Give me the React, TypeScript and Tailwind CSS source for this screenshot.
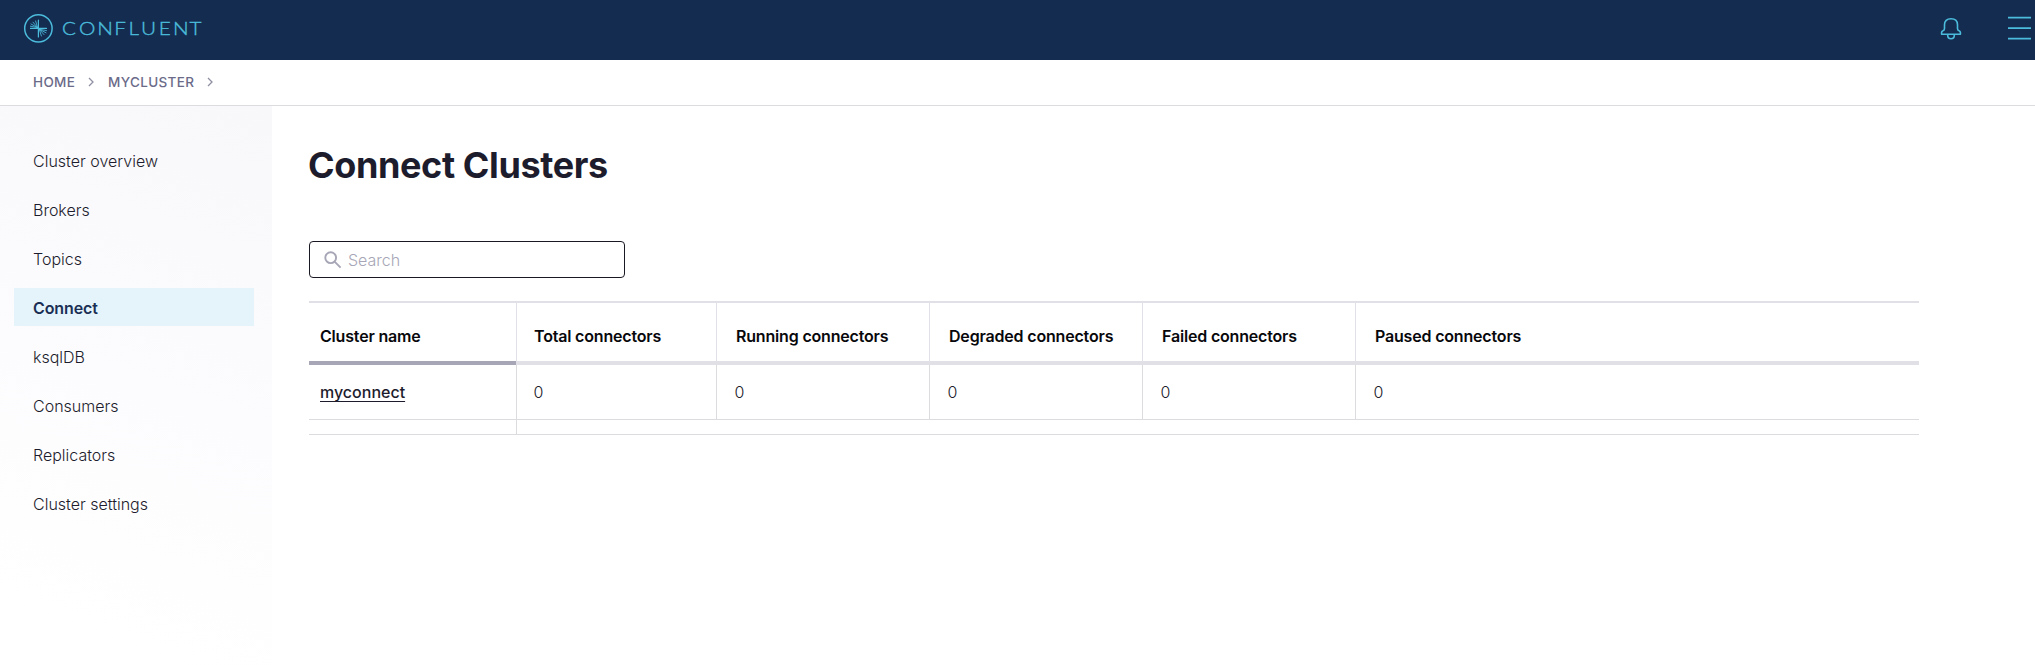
import React from "react";

const NAV = ["Cluster overview", "Brokers", "Topics", "Connect", "ksqlDB", "Consumers", "Replicators", "Cluster settings"];

const COLUMNS = ["Cluster name", "Total connectors", "Running connectors", "Degraded connectors", "Failed connectors", "Paused connectors"];

const GRID = "grid grid-cols-[207px_200px_213px_213px_213px_1fr]";

function Logo() {
  return (
    <svg width="190" height="32" viewBox="0 0 190 32" fill="none" stroke="#4bbcdb" aria-label="Confluent">
      <circle cx="15.400" cy="15.400" r="13.700" strokeWidth="1.500" />
      <g strokeWidth="0.850" strokeLinecap="round">
        <path d="M15.400 7V24M7.500 15.400H23.500" strokeWidth="1.200" />
        <path d="M14.600 14.600L10 9.200M14.600 14.600L12.600 8M14.600 14.600L8 11M14.600 14.600L7.400 13.200M16.200 16.200L21 21.600M16.200 16.200L18.400 23M16.200 16.200L23 19.800M16.200 16.200L23.500 17.600" />
      </g>
      <text
        transform="scale(1.15 1)"
        x="33.900 48.700 64.500 79.300 91.700 102.700 118 130.400 144.700"
        y="21.700"
        fill="#4bbcdb"
        strokeWidth="0.350"
        fontFamily="Lato, sans-serif"
        fontWeight="300"
        fontSize="18"
      >
        CONFLUENT
      </text>
    </svg>
  );
}

function BellIcon() {
  return (
    <svg width="22" height="24" viewBox="0 0 22 24" fill="none" stroke="#4bbcdb" strokeWidth="1.600" strokeLinejoin="round">
      <path d="M4.500 11.500V7.800C4.500 4 6.800 1.800 11 1.800s6.500 2.200 6.500 6v3.700c0 1.300.4 1.900 1.500 2.200.9.3 1.400.8 1.400 1.800v1.700H1.600v-1.700c0-1 .5-1.500 1.400-1.800C4.100 13.400 4.500 12.800 4.500 11.500Z" />
      <path d="M7.700 17.200v1c0 2 1.300 3.500 3.300 3.500s3.300-1.500 3.300-3.500v-1" />
    </svg>
  );
}

function MenuIcon() {
  return (
    <svg width="23" height="24" viewBox="0 0 23 24" fill="none" stroke="#4bbcdb" strokeWidth="1.800">
      <path d="M0 1.700H23M0 12.200H23M0 22.700H23" />
    </svg>
  );
}

function Chevron() {
  return (
    <svg width="6" height="10" viewBox="0 0 6 10" fill="none" stroke="#8f8fa3" strokeWidth="1.300">
      <path d="M1 1l4 4-4 4" />
    </svg>
  );
}

export default function App() {
  return (
    <div className="flex h-[665px] w-[2035px] flex-col overflow-hidden bg-white font-['Inter',sans-serif] text-[#1d1c2d]">
      <header className="flex h-[60px] shrink-0 items-start justify-between bg-[#152c51] pt-[13px] pr-1 pl-[23px]">
        <Logo />
        <div className="flex gap-[46.500px] pt-[3px]">
          <div className="pt-[1px]">
            <BellIcon />
          </div>
          <MenuIcon />
        </div>
      </header>

      <nav className="flex h-[46px] shrink-0 items-center border-b border-[#dcdce0] pb-px pl-[33px] text-[13.500px] font-medium tracking-[0.350px] text-[#6b6b89]">
        <a className="mr-[13px] w-[42px]">HOME</a>
        <Chevron />
        <a className="mr-[14px] ml-[14px] w-[85px]">MYCLUSTER</a>
        <Chevron />
      </nav>

      <div className="flex min-h-0 flex-1">
        <aside className="flex w-[272px] shrink-0 flex-col gap-[11.100px] bg-linear-[200deg,#f8f8fb_0%,#fcfcfe_50%,#ffffff_90%] pt-[35px] pr-[18px] pl-[14px]">
          {NAV.map((item) => (
            <a
              key={item}
              className={
                item === "Connect"
                  ? "flex h-[38px] items-center bg-[#e5f4fb] pt-px pl-[19px] text-[16px] font-semibold tracking-[-0.100px] text-[#1b2f55]"
                  : "flex h-[38px] items-center pt-px pl-[19px] text-[16px] font-light text-[#1d1c2d]"
              }
            >
              {item}
            </a>
          ))}
        </aside>

        <main className="flex flex-1 flex-col pr-[116px] pl-[37px]">
          <h1 className="mt-[37px] -ml-px h-[44px] text-[36px] leading-[44px] font-bold tracking-[-0.380px]">Connect Clusters</h1>

          <label className="mt-[54px] flex h-[37px] w-[316px] items-center rounded-[4px] border border-[#191924] pl-[14px] text-[16px] font-light text-[#a6a6b6]">
            <svg className="mr-[6px]" width="18" height="18" viewBox="0 0 18 18" fill="none" stroke="#a6a6b6" strokeWidth="1.900">
              <circle cx="6.700" cy="6.700" r="5.400" />
              <path d="M10.600 10.600l6 6" />
            </svg>
            Search
          </label>

          <div className="mt-[23px] flex flex-col border-t-2 border-[#e0e0e6]">
            <div className={GRID}>
              {COLUMNS.map((c, i) => (
                <div
                  key={c}
                  className={
                    i === 0
                      ? "h-[62px] border-b-4 border-b-[#a6a6b6] pt-[23px] pl-[11px] text-[16px] leading-[20px] font-semibold tracking-[-0.180px] text-[#08080c]"
                      : i === 1
                        ? "h-[62px] border-b-4 border-l border-b-[#e0e0e6] border-l-[#e0e0e6] pt-[23px] pl-[17px] text-[16px] leading-[20px] font-semibold tracking-[-0.180px] text-[#08080c]"
                        : "h-[62px] border-b-4 border-l border-b-[#e0e0e6] border-l-[#e0e0e6] pt-[23px] pl-[19px] text-[16px] leading-[20px] font-semibold tracking-[-0.180px] text-[#08080c]"
                  }
                >
                  {c}
                </div>
              ))}
            </div>
            <div className={GRID}>
              <div className="flex h-[55px] items-center border-b border-[#dcdce0] pl-[11px] text-[16px] font-medium">
                <a className="underline underline-offset-[3px]">myconnect</a>
              </div>
              {COLUMNS.slice(1).map((c, i) => (
                <div
                  key={c}
                  className={
                    i === 0
                      ? "flex h-[55px] items-center border-b border-l border-[#dcdce0] pl-[16.500px] text-[16px] font-light"
                      : "flex h-[55px] items-center border-b border-l border-[#dcdce0] pl-[17.500px] text-[16px] font-light"
                  }
                >
                  0
                </div>
              ))}
            </div>
            <div className="flex h-[15px] border-b border-[#dcdce0]">
              <div className="w-[207px]" />
              <div className="flex-1 border-l border-[#dcdce0]" />
            </div>
          </div>
        </main>
      </div>
    </div>
  );
}
